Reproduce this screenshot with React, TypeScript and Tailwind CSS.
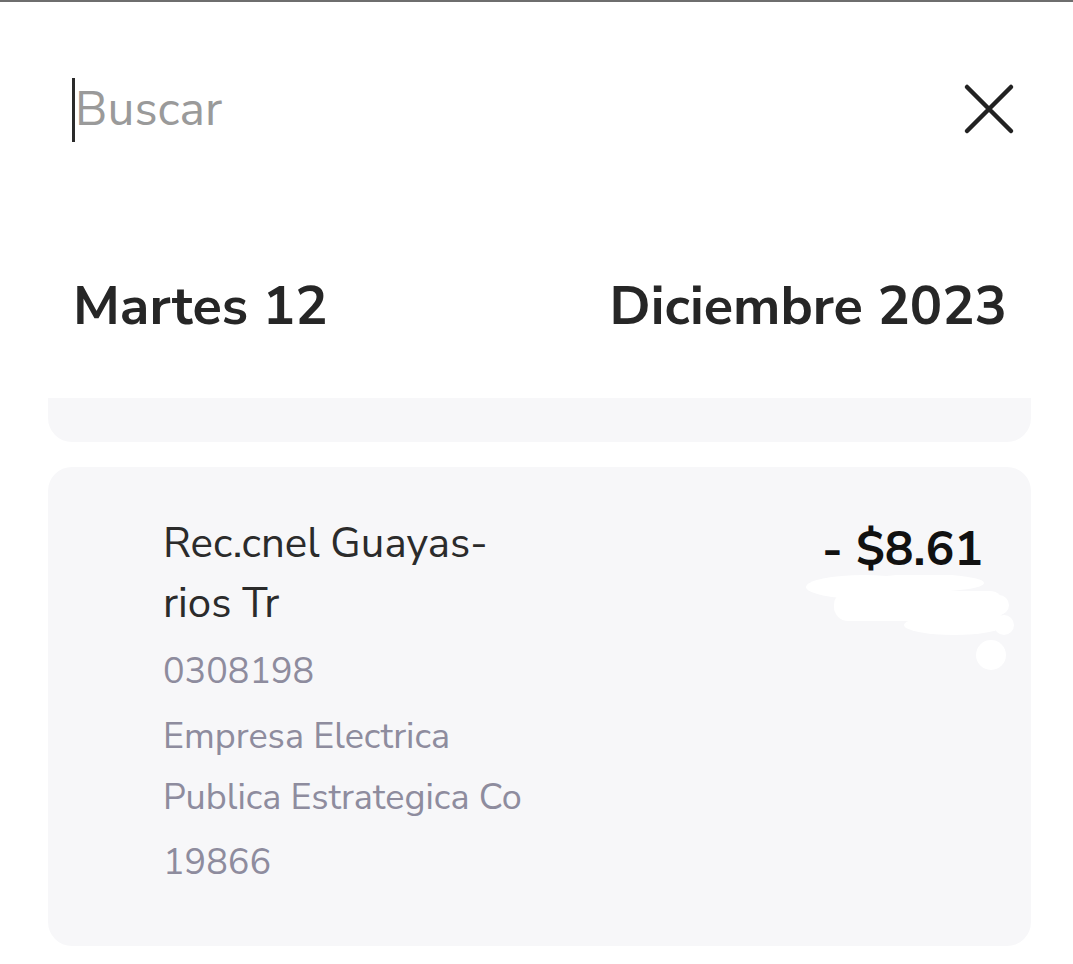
import React from "react";

const font = { fontFamily: '"Nunito Sans", Lato, "Open Sans", sans-serif' };

export default function App() {
  return (
    <div className="w-[1073px] h-[964px] bg-white overflow-hidden relative" style={font}>
      <div className="h-[2px] bg-[#6e6e6e]" />
      <div className="flex items-center justify-between pl-[72px] pr-[58px] pt-[75px]">
        <div className="flex items-center h-[66px]">
          <div className="w-[3px] h-[64px] bg-[#2a2a2a]" />
          <span className="text-[48px] leading-none text-[#9a9a9a] -mt-[2px]">Buscar</span>
        </div>
        <svg width="52" height="52" viewBox="0 0 52 52" className="-mt-[2px]">
          <path d="M4 4 L48 48 M48 4 L4 48" stroke="#222" strokeWidth="4.5" strokeLinecap="round" />
        </svg>
      </div>
      <div className="flex items-center justify-between pl-[73px] pr-[66px] mt-[136px]">
        <span className="text-[54px] font-bold text-[#262626] leading-none">Martes 12</span>
        <span className="text-[54px] font-bold text-[#262626] leading-none">Diciembre 2023</span>
      </div>
      <div className="ml-[48px] mr-[42px] mt-[65px] h-[44px] bg-[#f7f7f9] rounded-b-[24px]" />
      <div className="ml-[48px] mr-[42px] mt-[25px] h-[479px] bg-[#f7f7f9] rounded-[24px] relative flex justify-between pl-[115px] pr-[48px] pt-[47px]">
        <div className="flex flex-col">
          <div className="text-[42px] leading-[60px] text-[#2b2b2b] w-[360px]">
            Rec.cnel Guayas-
            <br />
            rios Tr
          </div>
          <div className="text-[36px] leading-[62px] text-[#8e8c9e] mt-[7px]">0308198</div>
          <div className="text-[36px] leading-[61px] text-[#8e8c9e] mt-[3px]">
            Empresa Electrica
            <br />
            Publica Estrategica Co
          </div>
          <div className="text-[36px] leading-[62px] text-[#8e8c9e] mt-[4px]">19866</div>
        </div>
        <div className="text-[48px] font-bold text-[#111] leading-none mt-[11px]">- $8.61</div>
        <svg className="absolute left-[756px] top-[108px]" width="220" height="100" viewBox="0 0 220 100">
          <g fill="#ffffff">
            <ellipse cx="60" cy="12" rx="58" ry="12" />
            <ellipse cx="120" cy="8" rx="60" ry="9" />
            <rect x="30" y="16" width="170" height="30" rx="14" />
            <ellipse cx="150" cy="50" rx="50" ry="10" />
            <circle cx="195" cy="30" r="10" />
            <circle cx="200" cy="50" r="10" />
            <circle cx="187" cy="80" r="15" />
          </g>
        </svg>
      </div>
    </div>
  );
}
